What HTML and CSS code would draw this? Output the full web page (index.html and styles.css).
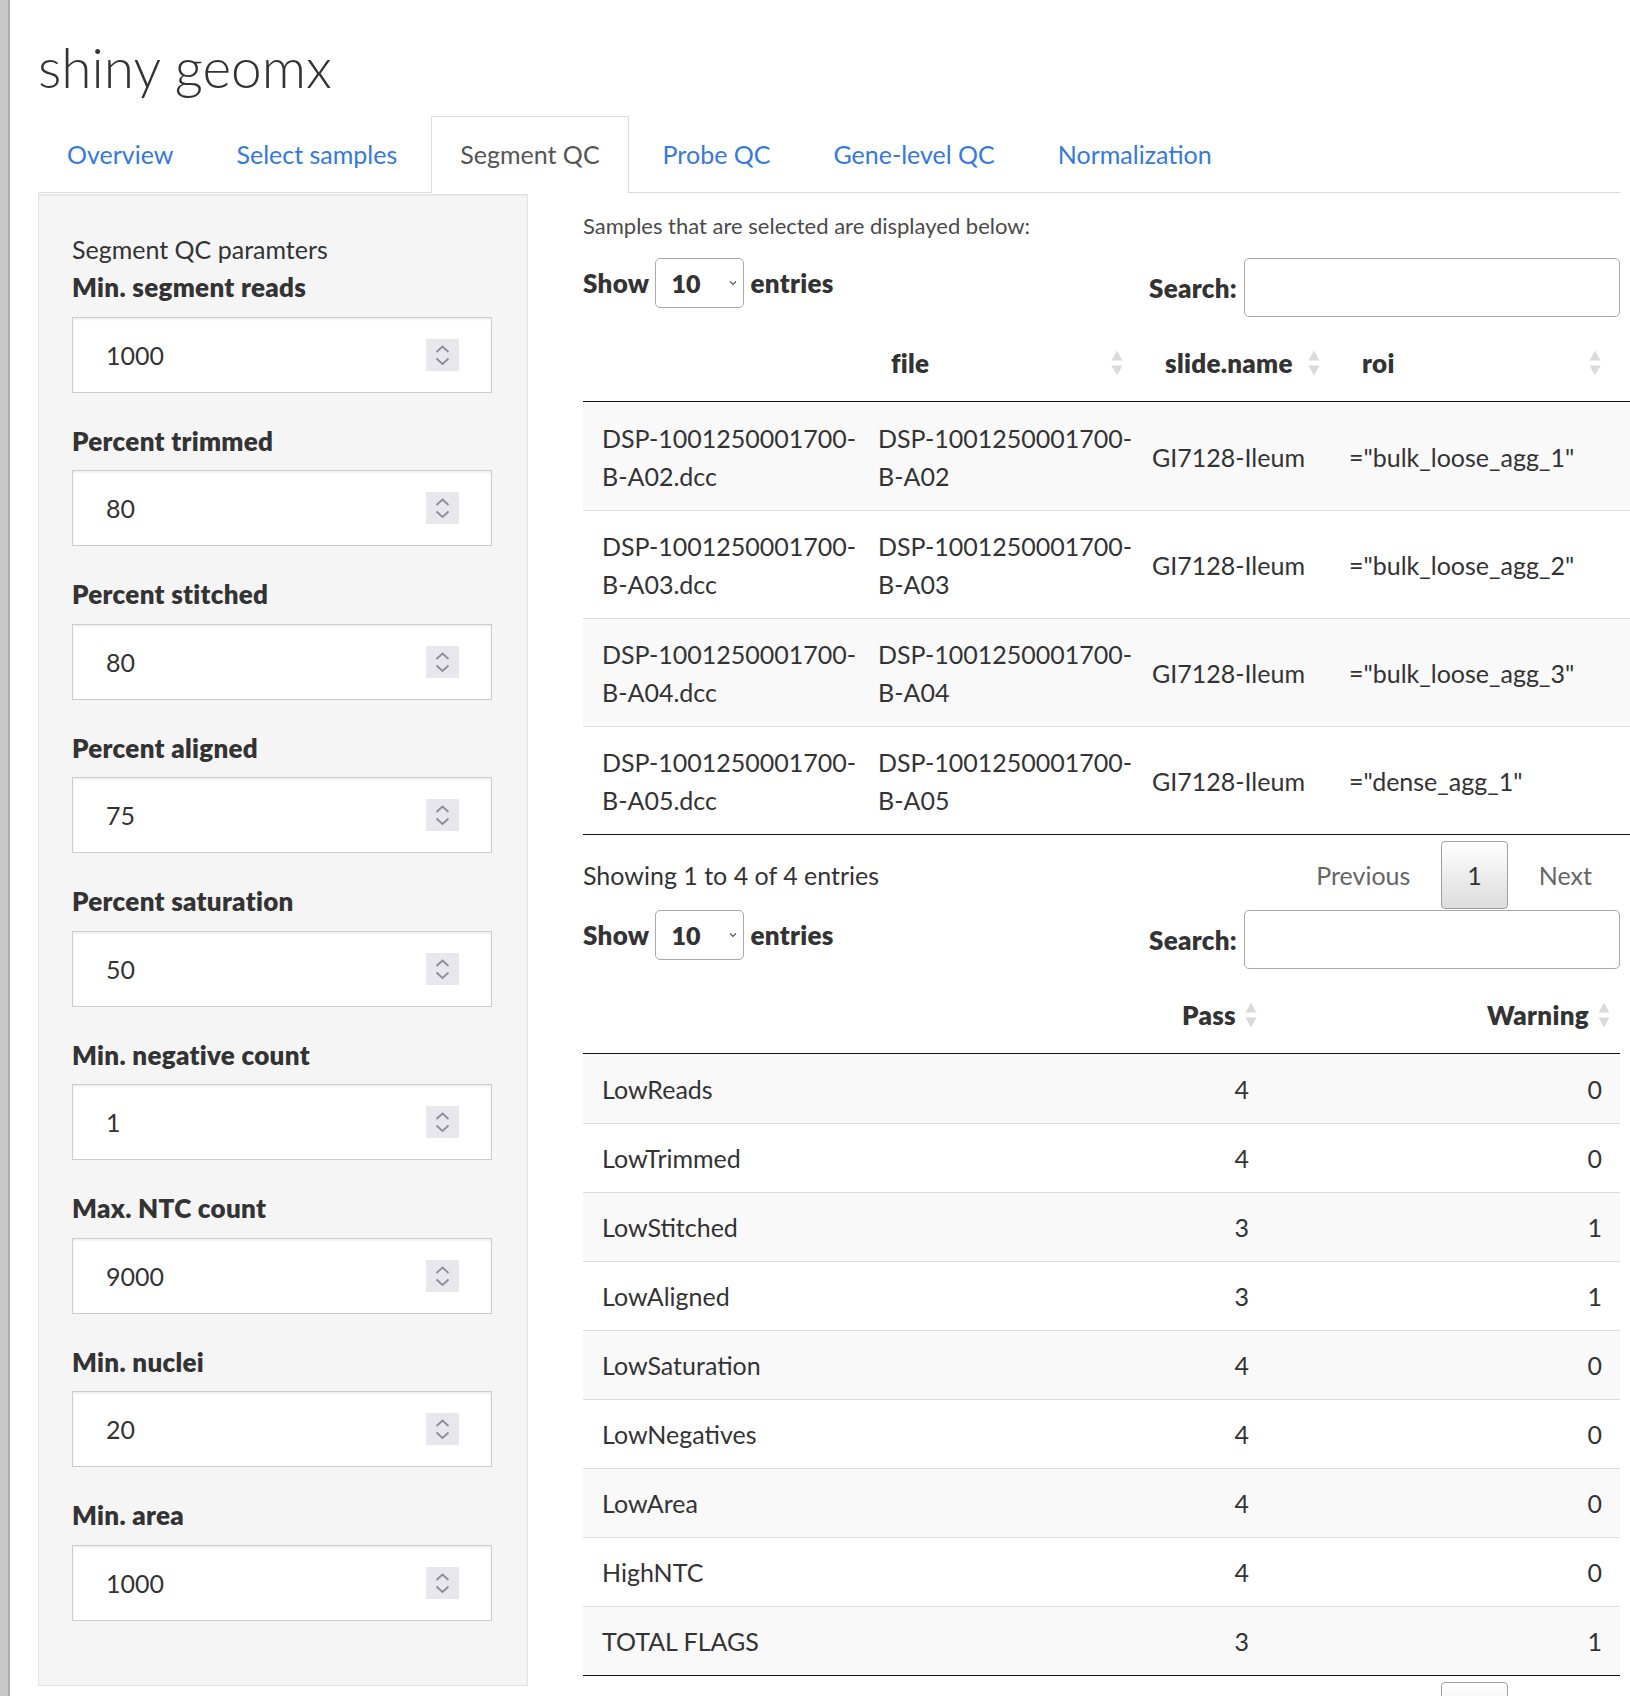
FILE: index.html
```html
<!DOCTYPE html>
<html lang="en">
<head>
<meta charset="utf-8">
<title>shiny geomx</title>
<link rel="stylesheet" href="styles.css">
</head>
<body>
<div class="app">
  <div class="edge"></div>
  <div class="page">
    <h1 class="title">shiny geomx</h1>
    <ul class="tabs">
      <li><a class="tab" href="#">Overview</a></li>
      <li><a class="tab" href="#">Select samples</a></li>
      <li><a class="tab active" href="#">Segment QC</a></li>
      <li><a class="tab" href="#">Probe QC</a></li>
      <li><a class="tab" href="#">Gene-level QC</a></li>
      <li><a class="tab" href="#">Normalization</a></li>
    </ul>
    <div class="layout">
      <aside class="well">
        <div class="well-title">Segment QC paramters</div>
        <div class="form-group">
          <label class="ctl-label">Min. segment reads</label>
          <div class="num-input"><input class="num-field" value="1000"><span class="spin"><svg width="33" height="32" viewBox="0 0 33 32"><path d="M10.5 13 L16.5 7.5 L22.5 13" fill="none" stroke="#8d8d9a" stroke-width="1.8"/><path d="M10.5 19.5 L16.5 25 L22.5 19.5" fill="none" stroke="#8d8d9a" stroke-width="1.8"/></svg></span></div>
        </div>
        <div class="form-group">
          <label class="ctl-label">Percent trimmed</label>
          <div class="num-input"><input class="num-field" value="80"><span class="spin"><svg width="33" height="32" viewBox="0 0 33 32"><path d="M10.5 13 L16.5 7.5 L22.5 13" fill="none" stroke="#8d8d9a" stroke-width="1.8"/><path d="M10.5 19.5 L16.5 25 L22.5 19.5" fill="none" stroke="#8d8d9a" stroke-width="1.8"/></svg></span></div>
        </div>
        <div class="form-group">
          <label class="ctl-label">Percent stitched</label>
          <div class="num-input"><input class="num-field" value="80"><span class="spin"><svg width="33" height="32" viewBox="0 0 33 32"><path d="M10.5 13 L16.5 7.5 L22.5 13" fill="none" stroke="#8d8d9a" stroke-width="1.8"/><path d="M10.5 19.5 L16.5 25 L22.5 19.5" fill="none" stroke="#8d8d9a" stroke-width="1.8"/></svg></span></div>
        </div>
        <div class="form-group">
          <label class="ctl-label">Percent aligned</label>
          <div class="num-input"><input class="num-field" value="75"><span class="spin"><svg width="33" height="32" viewBox="0 0 33 32"><path d="M10.5 13 L16.5 7.5 L22.5 13" fill="none" stroke="#8d8d9a" stroke-width="1.8"/><path d="M10.5 19.5 L16.5 25 L22.5 19.5" fill="none" stroke="#8d8d9a" stroke-width="1.8"/></svg></span></div>
        </div>
        <div class="form-group">
          <label class="ctl-label">Percent saturation</label>
          <div class="num-input"><input class="num-field" value="50"><span class="spin"><svg width="33" height="32" viewBox="0 0 33 32"><path d="M10.5 13 L16.5 7.5 L22.5 13" fill="none" stroke="#8d8d9a" stroke-width="1.8"/><path d="M10.5 19.5 L16.5 25 L22.5 19.5" fill="none" stroke="#8d8d9a" stroke-width="1.8"/></svg></span></div>
        </div>
        <div class="form-group">
          <label class="ctl-label">Min. negative count</label>
          <div class="num-input"><input class="num-field" value="1"><span class="spin"><svg width="33" height="32" viewBox="0 0 33 32"><path d="M10.5 13 L16.5 7.5 L22.5 13" fill="none" stroke="#8d8d9a" stroke-width="1.8"/><path d="M10.5 19.5 L16.5 25 L22.5 19.5" fill="none" stroke="#8d8d9a" stroke-width="1.8"/></svg></span></div>
        </div>
        <div class="form-group">
          <label class="ctl-label">Max. NTC count</label>
          <div class="num-input"><input class="num-field" value="9000"><span class="spin"><svg width="33" height="32" viewBox="0 0 33 32"><path d="M10.5 13 L16.5 7.5 L22.5 13" fill="none" stroke="#8d8d9a" stroke-width="1.8"/><path d="M10.5 19.5 L16.5 25 L22.5 19.5" fill="none" stroke="#8d8d9a" stroke-width="1.8"/></svg></span></div>
        </div>
        <div class="form-group">
          <label class="ctl-label">Min. nuclei</label>
          <div class="num-input"><input class="num-field" value="20"><span class="spin"><svg width="33" height="32" viewBox="0 0 33 32"><path d="M10.5 13 L16.5 7.5 L22.5 13" fill="none" stroke="#8d8d9a" stroke-width="1.8"/><path d="M10.5 19.5 L16.5 25 L22.5 19.5" fill="none" stroke="#8d8d9a" stroke-width="1.8"/></svg></span></div>
        </div>
        <div class="form-group">
          <label class="ctl-label">Min. area</label>
          <div class="num-input"><input class="num-field" value="1000"><span class="spin"><svg width="33" height="32" viewBox="0 0 33 32"><path d="M10.5 13 L16.5 7.5 L22.5 13" fill="none" stroke="#8d8d9a" stroke-width="1.8"/><path d="M10.5 19.5 L16.5 25 L22.5 19.5" fill="none" stroke="#8d8d9a" stroke-width="1.8"/></svg></span></div>
        </div>
      </aside>

      <main class="main">
        <p class="intro">Samples that are selected are displayed below:</p>

        <div class="dt">
          <div class="dt-controls">
            <div class="dt-length">Show <span class="len-select"><span>10</span><svg width="8" height="6" viewBox="0 0 8 6"><path d="M1 1.5 L4 4.5 L7 1.5" fill="none" stroke="#555" stroke-width="1.2"/></svg></span> entries</div>
            <div class="dt-filter">Search: <input class="search" type="text"></div>
          </div>
          <table class="dt-table samples">
            <colgroup><col class="c-row"><col class="c-file"><col class="c-slide"><col class="c-roi"><col class="c-more"></colgroup>
            <thead>
              <tr>
                <th></th>
                <th><div class="th-inner"><span>file</span><svg class="sort" width="12" height="26" viewBox="0 0 12 26"><path d="M6 0.5 L11.5 10.5 L0.5 10.5 Z" fill="#dadada"/><path d="M0.5 15.5 L11.5 15.5 L6 25.5 Z" fill="#dadada"/></svg></div></th>
                <th><div class="th-inner"><span>slide.name</span><svg class="sort" width="12" height="26" viewBox="0 0 12 26"><path d="M6 0.5 L11.5 10.5 L0.5 10.5 Z" fill="#dadada"/><path d="M0.5 15.5 L11.5 15.5 L6 25.5 Z" fill="#dadada"/></svg></div></th>
                <th><div class="th-inner"><span>roi</span><svg class="sort" width="12" height="26" viewBox="0 0 12 26"><path d="M6 0.5 L11.5 10.5 L0.5 10.5 Z" fill="#dadada"/><path d="M0.5 15.5 L11.5 15.5 L6 25.5 Z" fill="#dadada"/></svg></div></th>
                <th></th>
              </tr>
            </thead>
            <tbody>
              <tr><td>DSP-1001250001700-<br>B-A02.dcc</td><td>DSP-1001250001700-<br>B-A02</td><td>GI7128-Ileum</td><td>="bulk_loose_agg_1"</td><td></td></tr>
              <tr><td>DSP-1001250001700-<br>B-A03.dcc</td><td>DSP-1001250001700-<br>B-A03</td><td>GI7128-Ileum</td><td>="bulk_loose_agg_2"</td><td></td></tr>
              <tr><td>DSP-1001250001700-<br>B-A04.dcc</td><td>DSP-1001250001700-<br>B-A04</td><td>GI7128-Ileum</td><td>="bulk_loose_agg_3"</td><td></td></tr>
              <tr><td>DSP-1001250001700-<br>B-A05.dcc</td><td>DSP-1001250001700-<br>B-A05</td><td>GI7128-Ileum</td><td>="dense_agg_1"</td><td></td></tr>
            </tbody>
          </table>
          <div class="dt-footer">
            <div class="dt-info">Showing 1 to 4 of 4 entries</div>
            <div class="dt-paginate"><a class="pg disabled">Previous</a><a class="pg current">1</a><a class="pg disabled">Next</a></div>
          </div>
        </div>

        <div class="dt dt-second">
          <div class="dt-controls">
            <div class="dt-length">Show <span class="len-select"><span>10</span><svg width="8" height="6" viewBox="0 0 8 6"><path d="M1 1.5 L4 4.5 L7 1.5" fill="none" stroke="#555" stroke-width="1.2"/></svg></span> entries</div>
            <div class="dt-filter">Search: <input class="search" type="text"></div>
          </div>
          <table class="dt-table flags">
            <colgroup><col class="c-name"><col class="c-pass"><col class="c-warn"></colgroup>
            <thead>
              <tr>
                <th></th>
                <th class="num"><div class="th-inner"><span>Pass</span><svg class="sort" width="12" height="26" viewBox="0 0 12 26"><path d="M6 0.5 L11.5 10.5 L0.5 10.5 Z" fill="#dadada"/><path d="M0.5 15.5 L11.5 15.5 L6 25.5 Z" fill="#dadada"/></svg></div></th>
                <th class="num"><div class="th-inner"><span>Warning</span><svg class="sort" width="12" height="26" viewBox="0 0 12 26"><path d="M6 0.5 L11.5 10.5 L0.5 10.5 Z" fill="#dadada"/><path d="M0.5 15.5 L11.5 15.5 L6 25.5 Z" fill="#dadada"/></svg></div></th>
              </tr>
            </thead>
            <tbody>
              <tr><td>LowReads</td><td class="num">4</td><td class="num">0</td></tr>
              <tr><td>LowTrimmed</td><td class="num">4</td><td class="num">0</td></tr>
              <tr><td>LowStitched</td><td class="num">3</td><td class="num">1</td></tr>
              <tr><td>LowAligned</td><td class="num">3</td><td class="num">1</td></tr>
              <tr><td>LowSaturation</td><td class="num">4</td><td class="num">0</td></tr>
              <tr><td>LowNegatives</td><td class="num">4</td><td class="num">0</td></tr>
              <tr><td>LowArea</td><td class="num">4</td><td class="num">0</td></tr>
              <tr><td>HighNTC</td><td class="num">4</td><td class="num">0</td></tr>
              <tr><td>TOTAL FLAGS</td><td class="num">3</td><td class="num">1</td></tr>
            </tbody>
          </table>
          <div class="dt-footer">
            <div class="dt-info">Showing 1 to 9 of 9 entries</div>
            <div class="dt-paginate"><a class="pg disabled">Previous</a><a class="pg current">1</a><a class="pg disabled">Next</a></div>
          </div>
        </div>
      </main>
    </div>
  </div>
</div>
</body>
</html>
```

FILE: styles.css
```css
html, body {
  margin: 0;
  padding: 0;
  background: #ffffff;
}

body {
  font-family: "Lato", "Liberation Sans", sans-serif;
  font-size: 25px;
  line-height: 38px;
  color: #333333;
}

.app {
  display: flex;
  height: 100vh;
  overflow: hidden;
}

.edge {
  flex: 0 0 8px;
  background: #c8c8c8;
  border-right: 2px solid #acacac;
}

.page {
  flex: 1;
  min-width: 0;
  padding: 0 10px 0 28px;
}

.title {
  font-size: 55px;
  font-weight: 300;
  line-height: 1.2;
  margin: 34px 0 16px;
  color: #333333;
}

/* tabs */
.tabs {
  display: flex;
  list-style: none;
  margin: 0;
  padding: 0;
  border-bottom: 1px solid #dddddd;
}

.tabs li {
  margin-right: 5px;
}

.tab {
  display: block;
  padding: 18px 28px 20px;
  border: 1px solid transparent;
  border-bottom: 0;
  margin-bottom: -1px;
  color: #3579dc;
  text-decoration: none;
  line-height: 38px;
}

.tab.active {
  color: #555555;
  background: #ffffff;
  border-color: #dddddd;
}

/* layout */
.layout {
  display: grid;
  grid-template-columns: 490px 1fr;
  column-gap: 55px;
  margin-top: 1px;
  align-items: start;
}

.well {
  background: #f5f5f5;
  border: 1px solid #e3e3e3;
  box-shadow: inset 0 1px 1px rgba(0, 0, 0, 0.05);
  padding: 35px 35px 35px 33px;
}

.well-title {
  line-height: 38px;
}

.form-group {
  margin-bottom: 29px;
}

.ctl-label {
  display: block;
  font-size: 26px;
  letter-spacing: 0.3px;
  font-weight: 800;
  margin-bottom: 10.5px;
}

.num-input {
  display: flex;
  align-items: center;
  height: 76px;
  box-sizing: border-box;
  border: 1px solid #cccccc;
  background: #ffffff;
  box-shadow: inset 0 2px 2px rgba(0, 0, 0, 0.06);
  padding: 0 32px 0 33px;
}

.num-field {
  flex: 1;
  min-width: 0;
  border: 0;
  padding: 0;
  background: transparent;
  font: inherit;
  color: #333333;
  outline: none;
}

.spin {
  display: flex;
  width: 33px;
  height: 32px;
  background: #e8e7ed;
}

/* main */
.main {
  min-width: 0;
}

.intro {
  margin: 0 0 15px;
  padding-top: 16px;
  font-size: 22px;
  line-height: 32px;
  color: #4a4a4a;
}

.dt-controls {
  display: flex;
  justify-content: space-between;
  align-items: flex-start;
}

.dt-length {
  display: flex;
  align-items: center;
  gap: 6px;
  height: 52px;
  font-size: 26px;
  letter-spacing: 0.3px;
  font-weight: 800;
}

.len-select {
  display: flex;
  align-items: center;
  justify-content: space-between;
  box-sizing: border-box;
  width: 89px;
  height: 50px;
  border: 1px solid #aaaaaa;
  border-radius: 5px;
  padding: 0 6px 0 15px;
  font-size: 25px;
  letter-spacing: 0;
  font-weight: 800;
}

.dt-filter {
  display: flex;
  align-items: center;
  gap: 7px;
  font-size: 26px;
  letter-spacing: 0.3px;
  font-weight: 800;
  padding-top: 1px;
}

.search {
  box-sizing: border-box;
  width: 376px;
  height: 59px;
  border: 1px solid #aaaaaa;
  border-radius: 5px;
  font: inherit;
  background: #ffffff;
}

.dt-table {
  border-collapse: collapse;
  table-layout: fixed;
  margin-top: 10px;
}

.dt-table th {
  text-align: left;
  font-size: 26px;
  letter-spacing: 0.3px;
  font-weight: 800;
  white-space: nowrap;
  padding: 17px 10px 19px 32px;
  border-bottom: 1px solid #111111;
  line-height: 38px;
}

.th-inner {
  display: flex;
  align-items: center;
  justify-content: space-between;
}

.dt-table th.num .th-inner {
  justify-content: flex-end;
  gap: 9px;
}

.sort {
  flex: 0 0 12px;
}

.dt-table td {
  padding: 15px 18px 15px 19px;
  border-top: 1px solid #dddddd;
  vertical-align: middle;
  white-space: nowrap;
}

.dt-table tbody tr:first-child td {
  border-top: 0;
}

.dt-table tbody tr:nth-child(odd) {
  background: #f9f9f9;
}

.dt-table tbody tr:last-child td {
  border-bottom: 1px solid #111111;
}

.samples {
  width: 1228px;
}

.samples td {
  padding-top: 16px;
  padding-bottom: 15px;
}

.samples tbody tr:first-child td {
  padding-top: 17px;
}

.c-row { width: 276px; }
.c-file { width: 274px; }
.c-slide { width: 197px; }
.c-roi { width: 281px; }
.c-more { width: 200px; }

.flags {
  width: 100%;
}

.flags tbody tr:first-child td {
  padding-top: 16px;
}

.c-name { width: 384px; }
.c-pass { width: 300px; }
.c-warn { width: 353px; }

.dt-table td.num {
  text-align: right;
}

.dt-footer {
  display: flex;
  justify-content: space-between;
  align-items: center;
  padding-top: 6px;
}

.dt-paginate {
  display: flex;
}

.pg {
  display: block;
  padding: 14px 27px;
  margin-left: 3px;
  border: 1px solid transparent;
  border-radius: 4px;
  line-height: 38px;
  color: #333333;
}

.pg.disabled {
  color: #666666;
}

.pg.current {
  border-color: #a0a0a0;
  background: linear-gradient(to bottom, #ffffff 0%, #dcdcdc 100%);
  color: #333333;
  padding: 14px 25px;
}

.dt-second {
  margin-top: 0;
}
```
